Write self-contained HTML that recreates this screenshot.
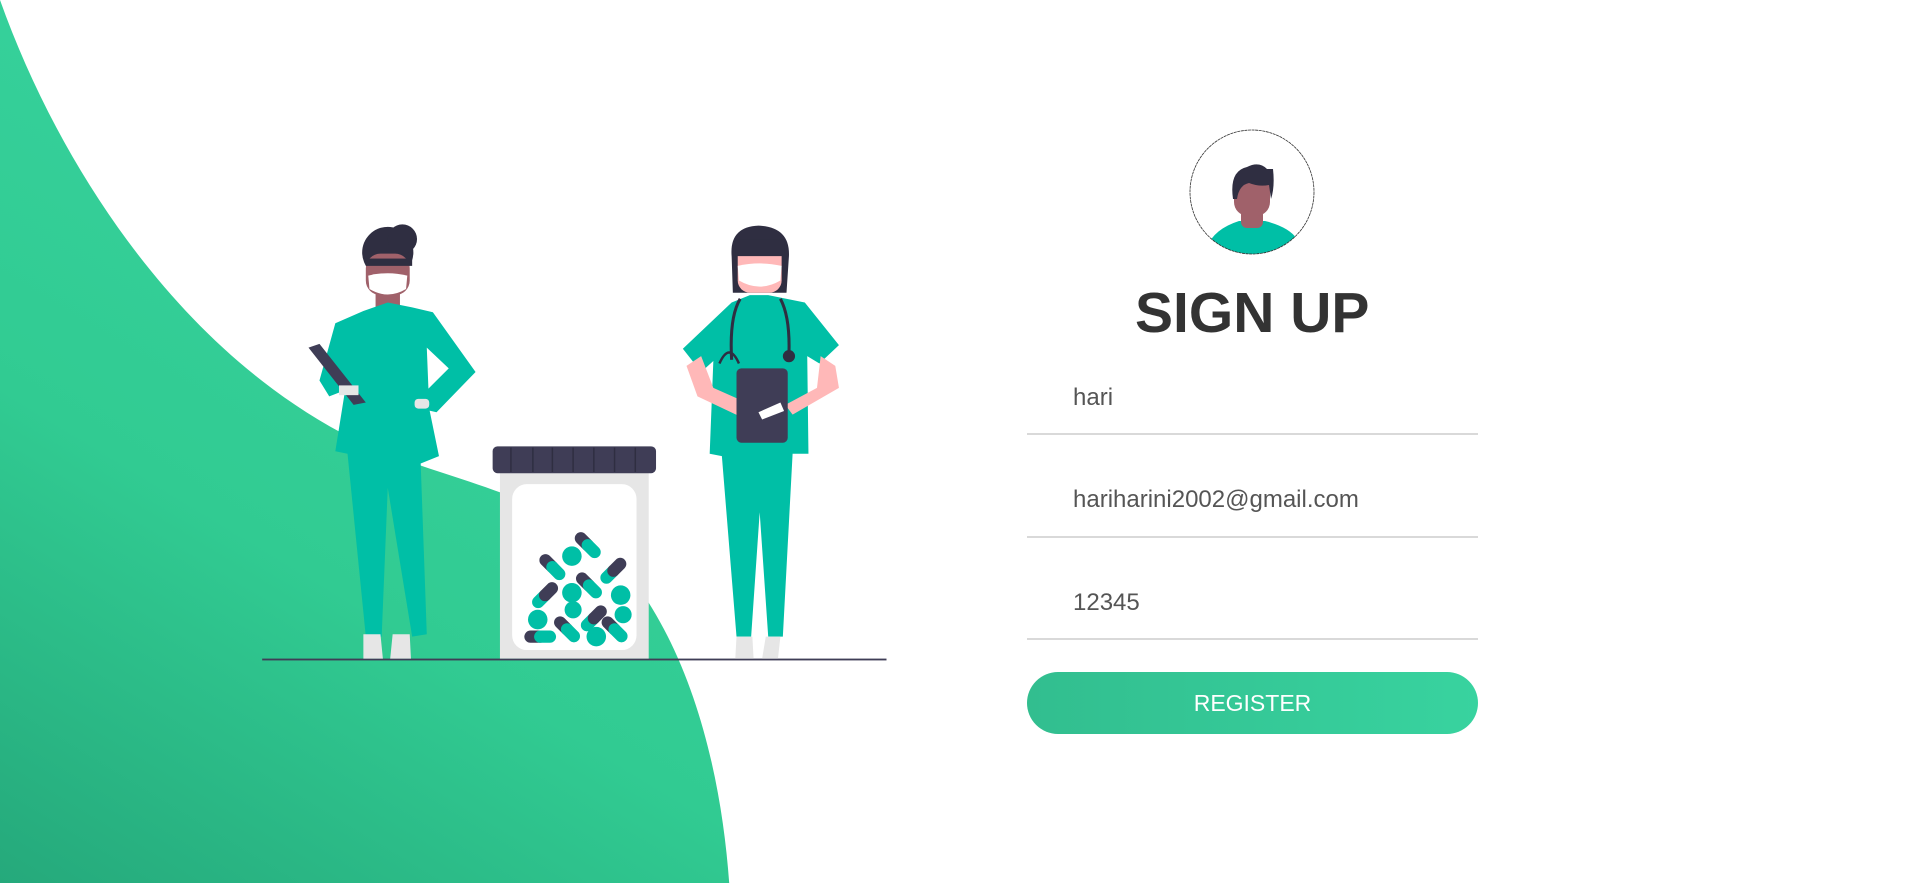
<!DOCTYPE html>
<html><head><meta charset="utf-8"><style>
html,body{margin:0;padding:0;width:1912px;height:883px;overflow:hidden;background:#fff;font-family:"Liberation Sans",Arial,sans-serif}
svg.bg{position:absolute;left:0;top:0}
.t{position:absolute;white-space:nowrap}
.line{position:absolute;left:1027px;width:451px;height:2px;background:#d9d9d9}
</style></head><body>
<svg class="bg" width="1912" height="883" viewBox="0 0 1568 724" preserveAspectRatio="none">
<defs>
<linearGradient id="g" x1="0.5" y1="0" x2="0" y2="1">
<stop offset="0" stop-color="#38d39f"/><stop offset="0.55" stop-color="#31cb92"/><stop offset="1" stop-color="#25a97b"/>
</linearGradient>
</defs>
<path d="M0,0 C50,140 150,290 290,360 C370,398 450,400 515,470 C570,540 592,640 598,724 L0,724 Z" fill="url(#g)"/>
<rect x="215" y="540" width="512" height="1.5" fill="#3f3d56"/>
<g>
<circle cx="318" cy="207" r="21" fill="#2f2e41"/>
<circle cx="330" cy="196" r="12" fill="#2f2e41"/>
<rect x="300" y="208" width="36" height="34" rx="12" fill="#a0616a"/>
<rect x="300" y="212" width="38" height="6" fill="#2f2e41"/>
<rect x="308" y="238" width="20" height="16" fill="#a0616a"/>
<path d="M302,226 Q318,222 334,226 L333,237 Q318,246 303,237 Z" fill="#fff"/>
<path d="M298,255 L318,248 L338,252 L355,256 L390,305 L358,338 L345,335 L348,322 L368,302 L350,285 L352,335 L360,374 L345,380 L350,520 L338,522 L318,400 L313,522 L300,522 L285,372 L275,370 L283,320 L270,325 L262,312 L275,265 Z" fill="#00bfa6"/>
<path d="M253,285 L262,282 L300,330 L290,332 Z" fill="#3f3d56"/>
<rect x="278" y="316" width="16" height="8" fill="#e6e6e6"/>
<rect x="340" y="327" width="12" height="8" rx="3" fill="#e6e6e6"/>
<path d="M298,520 L312,520 L314,540 L298,540 Z M322,520 L336,520 L337,540 L320,540 Z" fill="#e6e6e6"/>
</g>
<rect x="410" y="386" width="122" height="154" fill="#e6e6e6"/>
<rect x="420" y="397" width="102" height="136" rx="12" fill="#fff"/>
<rect x="404" y="366" width="134" height="22" rx="4" fill="#3f3d56"/>
<g stroke="#2f2e41" stroke-width="1.2"><line x1="419" y1="367" x2="419" y2="387"/><line x1="437" y1="367" x2="437" y2="387"/><line x1="453" y1="367" x2="453" y2="387"/><line x1="470" y1="367" x2="470" y2="387"/><line x1="487" y1="367" x2="487" y2="387"/><line x1="504" y1="367" x2="504" y2="387"/><line x1="521" y1="367" x2="521" y2="387"/></g>
<g stroke-linecap="round" stroke-width="10">
<g transform="translate(482,447) rotate(45)"><line x1="-8" y1="0" x2="0" y2="0" stroke="#3f3d56"/><line x1="0" y1="0" x2="8" y2="0" stroke="#00bfa6"/></g>
<g transform="translate(453,465) rotate(45)"><line x1="-8" y1="0" x2="0" y2="0" stroke="#3f3d56"/><line x1="0" y1="0" x2="8" y2="0" stroke="#00bfa6"/></g>
<g transform="translate(503,468) rotate(-45)"><line x1="-8" y1="0" x2="0" y2="0" stroke="#00bfa6"/><line x1="0" y1="0" x2="8" y2="0" stroke="#3f3d56"/></g>
<g transform="translate(483,480) rotate(45)"><line x1="-8" y1="0" x2="0" y2="0" stroke="#3f3d56"/><line x1="0" y1="0" x2="8" y2="0" stroke="#00bfa6"/></g>
<g transform="translate(447,488) rotate(-45)"><line x1="-8" y1="0" x2="0" y2="0" stroke="#00bfa6"/><line x1="0" y1="0" x2="8" y2="0" stroke="#3f3d56"/></g>
<g transform="translate(487,507) rotate(-45)"><line x1="-8" y1="0" x2="0" y2="0" stroke="#00bfa6"/><line x1="0" y1="0" x2="8" y2="0" stroke="#3f3d56"/></g>
<g transform="translate(465,516) rotate(45)"><line x1="-8" y1="0" x2="0" y2="0" stroke="#3f3d56"/><line x1="0" y1="0" x2="8" y2="0" stroke="#00bfa6"/></g>
<g transform="translate(504,516) rotate(45)"><line x1="-8" y1="0" x2="0" y2="0" stroke="#3f3d56"/><line x1="0" y1="0" x2="8" y2="0" stroke="#00bfa6"/></g>
<g transform="translate(443,522)"><line x1="-8" y1="0" x2="0" y2="0" stroke="#3f3d56"/><line x1="0" y1="0" x2="8" y2="0" stroke="#00bfa6"/></g>
</g>
<g fill="#00bfa6">
<circle cx="469" cy="456" r="8"/><circle cx="469" cy="486" r="8"/><circle cx="470" cy="500" r="7"/><circle cx="509" cy="488" r="8"/><circle cx="511" cy="504" r="7"/><circle cx="441" cy="508" r="8"/><circle cx="489" cy="522" r="8"/>
</g>
<g>
<path d="M600,210 Q598,186 622,185 Q648,186 647,210 L645,240 L601,240 Z" fill="#2f2e41"/>
<rect x="605" y="200" width="36" height="40" rx="10" fill="#ffb8b8"/>
<rect x="603" y="196" width="40" height="14" fill="#2f2e41"/>
<path d="M605,218 Q623,214 641,218 L640,230 Q623,240 606,230 Z" fill="#fff"/>
<path d="M600,248 L615,242 L630,242 L660,248 L688,283 L672,298 L662,292 L663,372 L650,372 L642,522 L630,522 L623,420 L616,522 L604,522 L592,374 L582,372 L585,296 L575,305 L560,286 Z" fill="#00bfa6"/>
<path d="M563,300 L575,292 L585,318 L612,330 L608,342 L572,325 Z" fill="#ffb8b8"/>
<path d="M673,292 L685,300 L688,318 L650,340 L644,332 L670,318 Z" fill="#ffb8b8"/>
<path d="M607,245 Q598,260 600,295 M640,245 Q648,260 647,290" stroke="#2f2e41" stroke-width="2.5" fill="none"/>
<path d="M590,298 Q598,280 606,298" stroke="#2f2e41" stroke-width="2" fill="none"/>
<circle cx="647" cy="292" r="5" fill="#2f2e41"/>
<rect x="604" y="302" width="42" height="61" rx="4" fill="#3f3d56"/>
<path d="M622,338 L640,330 L643,337 L625,344 Z" fill="#fff"/>
<path d="M604,522 L617,522 L618,540 L603,540 Z M628,522 L640,522 L638,540 L625,540 Z" fill="#e6e6e6"/>
</g>
</svg>
<svg style="position:absolute;left:1189px;top:129px" width="126" height="126" viewBox="0 0 126 126">
<defs><clipPath id="c"><circle cx="63" cy="63" r="62"/></clipPath></defs>
<g clip-path="url(#c)">
<path d="M18,118 Q25,100 50,92 L76,92 Q100,98 108,110 L108,130 L18,130 Z" fill="#00bfa6"/>
<rect x="52" y="75" width="22" height="24" rx="6" fill="#a0616a"/>
<rect x="45" y="45" width="36" height="42" rx="14" fill="#a0616a"/>
<path d="M44,70 Q40,42 58,38 Q70,32 78,40 L84,40 Q86,58 82,70 L80,56 Q70,58 60,54 Q50,56 48,70 Z" fill="#2f2e41"/>
</g>
<circle cx="63" cy="63" r="62" fill="none" stroke="#333" stroke-width="0.8" stroke-dasharray="3,0.6"/>
</svg>
<div class="t" style="left:1135px;top:280px;font-size:57px;font-weight:bold;color:#333;line-height:66px">SIGN UP</div>
<div class="t" style="left:1073px;top:384px;font-size:24px;color:#555;line-height:28px">hari</div>
<div class="line" style="top:433px"></div>
<div class="t" style="left:1073px;top:486px;font-size:24px;color:#555;line-height:28px">hariharini2002@gmail.com</div>
<div class="line" style="top:536px"></div>
<div class="t" style="left:1073px;top:589px;font-size:24px;color:#555;line-height:28px">12345</div>
<div class="line" style="top:638px"></div>
<div style="position:absolute;left:1027px;top:672px;width:451px;height:62px;border-radius:31px;background:linear-gradient(to right,#32be8f,#38d39f);color:#fff;font-size:23px;line-height:62px;text-align:center">REGISTER</div>
</body></html>
